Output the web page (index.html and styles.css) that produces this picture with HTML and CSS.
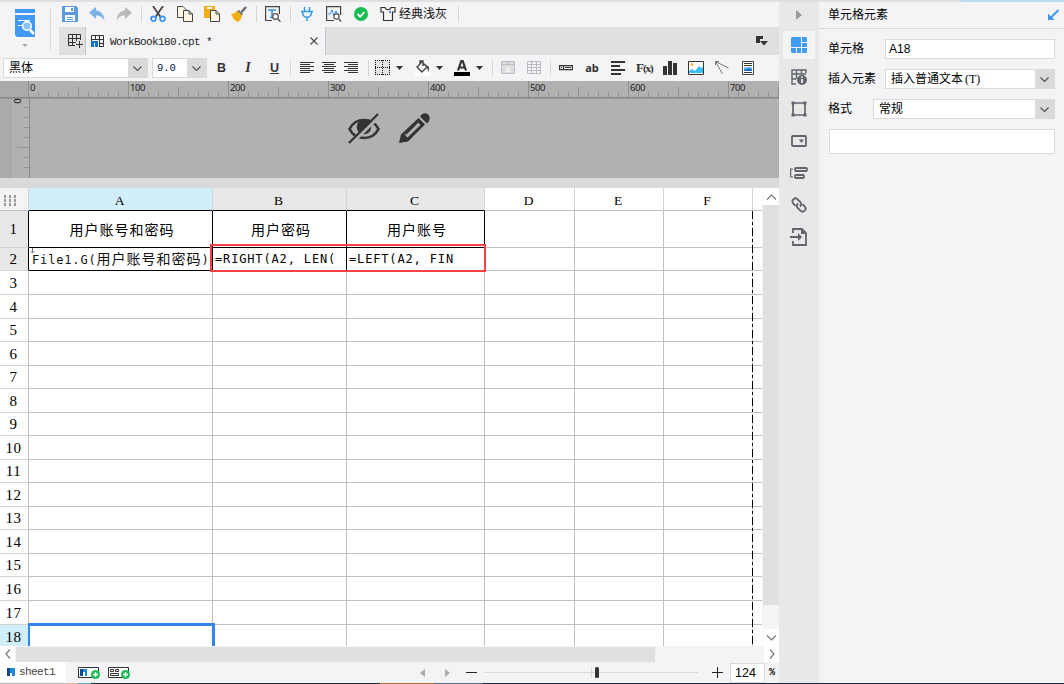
FILE: index.html
```html
<!DOCTYPE html>
<html lang="zh">
<head>
<meta charset="utf-8">
<title>WorkBook180.cpt</title>
<link rel="stylesheet" href="styles.css">
</head>
<body>
<div class="window-edge"><span></span></div>
<div class="app">
<main class="editor">
  <header class="top">
    <div class="app-menu">
      <svg width="22" height="28" viewBox="0 0 22 28"><path fill="#4199f5" d="M1 0h20v4H1zM1 6h20v22H3l-2-2z"/><path stroke="#fff" stroke-width="1.200" d="M4 11.500h12M4 16.500h6"/><circle cx="13" cy="17" r="4.300" fill="#8bc2f8" stroke="#fff" stroke-width="1.500"/><path stroke="#fff" stroke-width="2.500" d="M16 21l4 4"/></svg>
      <svg class="menu-caret" width="6" height="3"><path fill="#aaa" d="M0 0h6L3 3z"/></svg>
    </div>
    <div class="top-right">
      <div class="toolbar">
        <svg width="16" height="16"><path fill="#5b9bdc" d="M0 0h14l2 2v14H0z"/><path fill="#fff" d="M3 1h9v5H3zM3 9h10v6H3z"/><path fill="#5b9bdc" d="M9 2h2v3H9zM5 11h6v1H5zM5 13h6v1H5z"/></svg>
        <svg width="16" height="16"><path fill="#7db1e4" d="M0 6.500L7 1v3.500c5 .5 8 4 8.500 10.500C13.500 11 11 9.500 7 9.500V13z"/></svg>
        <svg width="16" height="16"><path fill="#b8b8ba" d="M16 6.500L9 1v3.500C4 5 1 8.500.5 15 2.500 11 5 9.500 9 9.500V13z"/></svg>
        <i class="sep"></i>
        <svg width="16" height="16" fill="none"><path stroke="#444" stroke-width="1.800" d="M3 0l7.500 11M13 0L5.500 11"/><circle cx="3.500" cy="12.700" r="2.400" stroke="#3992f0" stroke-width="1.700"/><circle cx="12.500" cy="12.700" r="2.400" stroke="#3992f0" stroke-width="1.700"/></svg>
        <svg width="16" height="16" fill="#fff7e2" stroke="#444"><path d="M.5.500H6L9.500 4v7.500h-9z"/><path d="M6.500 4.500H12L15.500 8v7.500h-9zM12 4.500V8h3.500"/></svg>
        <svg width="16" height="16"><path fill="#f3ab16" d="M0 0h11v12H0z"/><path fill="#fff" d="M3 1h5v2H3z"/><path fill="#fff7e2" stroke="#444" d="M6.500 4.500H12L15.500 8v7.500h-9zM12 4.500V8h3.500"/></svg>
        <svg width="16" height="16"><path stroke="#6a6c73" stroke-width="2.600" d="M15 1L10.500 6"/><path fill="#6a6c73" d="M8 4l4 4-1.500 1.500L6 5z"/><path fill="#f3ab16" d="M6 4.500l5 5C10.500 13 9 15 6.500 16L3 13.500 0 8c2.500 0 4.500-1 6-3.500z"/></svg>
        <i class="sep"></i>
        <svg width="16" height="16"><path fill="none" stroke="#444" stroke-width="1.200" d="M7 14.500H.600V.600h13.800V8"/><path stroke="#3992f0" stroke-width="1.600" d="M3 4h8M7 4v8M5 11.500h4"/><circle cx="10.500" cy="10.500" r="2.800" fill="#fff" stroke="#555" stroke-width="1.300"/><path stroke="#555" stroke-width="1.500" d="M13 13l2.500 3"/></svg>
        <i class="sep"></i>
        <svg width="16" height="16" fill="none" stroke="#2f9be8" stroke-width="1.500"><path d="M5.500 1v4M10.500 1v4M2 5.500h12M3.500 6c0 7 9 7 9 0M8 11v4"/></svg>
        <svg width="16" height="16"><path fill="none" stroke="#444" stroke-width="1.200" d="M8 14.500H.600V.600h14V9"/><path fill="none" stroke="#3992f0" d="M2 8h2l2-4 2 6 2-5 1 3h2"/><circle cx="10.500" cy="10.500" r="2.600" fill="#fff" stroke="#555" stroke-width="1.200"/><path stroke="#555" stroke-width="1.500" d="M13 13l2 2.500"/></svg>
        <svg width="16" height="16"><circle cx="8" cy="8" r="7" fill="#18bd52"/><path fill="none" stroke="#fff" stroke-width="1.800" d="M4.500 8l2.700 2.700L11.500 6"/></svg>
        <span class="theme"><svg width="16" height="16"><path fill="none" stroke="#333" stroke-width="1.200" d="M5 1.500H1V6h2.500v8.500h9V6H15V1.500h-4c-1 3-5 3-6 0z"/><path fill="#3992f0" d="M9 5h2v2H9z"/></svg>经典浅灰</span>
        <i class="sep"></i>
      </div>
      <div class="tabs">
        <div class="new-tab"><svg width="15" height="15" fill="none" stroke="#333"><path d="M7 12.500H.500V1.500h12V7M.500 5.500h12M.500 9.500H8M4.500 1.500v11M8.500 1.500V8M11.500 8v7M8 11.500h7"/></svg></div>
        <div class="tab">
          <svg width="14" height="14"><path fill="none" stroke="#333" d="M.500 7V1.500h12v11H8M.500 5.500h12M8 9.500h5M4.500 1v5M8.500 1v11"/><path fill="#1273c4" d="M0 7h7v6H4V9H3v4H0z"/></svg>
          <span>WorkBook180.cpt *</span>
          <svg class="close" width="8" height="8"><path stroke="#444" stroke-width="1.100" d="M.500.500l7 7M7.500.500l-7 7"/></svg>
        </div>
        <svg class="tab-list" width="12" height="10"><path fill="#333" d="M0 0h7v3H4v4H0zM4 5h8l-4 4.500z"/></svg>
      </div>
    </div>
  </header>

  <div class="format">
    <div class="combo font"><span>黑体</span><b><svg width="9" height="5"><path fill="none" stroke="#555" stroke-width="1.200" d="M.500.500l4 4 4-4"/></svg></b></div>
    <div class="combo size"><span>9.0</span><b><svg width="9" height="5"><path fill="none" stroke="#555" stroke-width="1.200" d="M.500.500l4 4 4-4"/></svg></b></div>
    <div class="group styles"><strong>B</strong><em>I</em><u>U</u></div>
    <i class="sep"></i>
    <div class="group aligns">
      <svg width="16" height="14"><path stroke="#333" d="M1 1.500h14M1 3.500h10M1 5.500h14M1 7.500h10M1 9.500h14M1 11.500h10"/></svg>
      <svg width="16" height="14"><path stroke="#333" d="M1 1.500h14M3 3.500h10M1 5.500h14M3 7.500h10M1 9.500h14M3 11.500h10"/></svg>
      <svg width="16" height="14"><path stroke="#333" d="M1 1.500h14M5 3.500h10M1 5.500h14M5 7.500h10M1 9.500h14M5 11.500h10"/></svg>
    </div>
    <i class="sep"></i>
    <div class="group drops">
      <svg width="16" height="16"><path fill="#e4e4e6" d="M0 1h15v14H0z"/><path fill="none" stroke="#111" stroke-dasharray="1 1" d="M0 .500h15M0 14.500h15M.500 0v15M14.500 0v15M7.500 0v15M0 7.500h15"/></svg>
      <svg width="8" height="4"><path fill="#333" d="M0 0h7L3.500 4z"/></svg>
      <svg width="16" height="16"><path fill="#fff" d="M0 12h16v4H0z"/><path fill="none" stroke="#444" stroke-width="1.400" d="M7 2l5 5-5 5-5-5zM5 5V1h3v5"/><path fill="#444" d="M10 4l4 3v5l-2-4z"/></svg>
      <svg width="8" height="4"><path fill="#333" d="M0 0h7L3.500 4z"/></svg>
      <svg width="16" height="16"><path d="M0 12h16v4H0z"/><path fill="none" stroke="#333" stroke-width="2.200" d="M4 10.500L7.300 1h1.400L12 10.500M5 7.500h6"/></svg>
      <svg width="8" height="4"><path fill="#333" d="M0 0h7L3.500 4z"/></svg>
    </div>
    <i class="sep"></i>
    <div class="group cells">
      <svg width="16" height="14"><path fill="#dedee0" stroke="#bcbcc0" d="M1.500.500h13v12h-13zM2 3.500h12M8 0v4"/><text x="5.500" y="11" font-size="9" fill="#fff">a</text></svg>
      <svg width="16" height="14"><path fill="none" stroke="#bcbcc0" d="M1.500.500h13v12h-13zM1 3.500h14M1 6.500h14M1 9.500h14M5.500 0v13M10.500 0v13"/></svg>
    </div>
    <i class="sep"></i>
    <div class="group inserts">
      <svg width="16" height="16"><path fill="none" stroke="#333" stroke-width="1.200" d="M1.600 5.600h12.800v4H1.600zM5.500 5v5M7 7.500h6M3 7.500h1"/></svg>
      <span class="ab">ab</span>
      <svg width="16" height="16"><path fill="#333" d="M1 1h14v2H1zM1 5h9v2H1zM1 9h14v2H1zM1 13h10v2H1z"/></svg>
      <span class="fx">F<small>(x)</small></span>
      <svg width="16" height="16"><path fill="#333" d="M1 6h4v9H1zM6 1h4v14H6zM11 3h4v12h-4z"/></svg>
      <svg width="16" height="16"><path fill="#fff" stroke="#333" d="M.500 1.500h15v13H.500z"/><circle cx="4" cy="4.500" r="1.500" fill="#ffb740"/><path fill="#38bdf8" d="M1 11l3-2 3 2 4-5 2 2 2-1v6H1z"/></svg>
      <svg width="16" height="16"><path fill="none" stroke="#777" d="M8.500 14L1.500 1.500 14.500 8M1.500 5V1.500H5"/></svg>
      <svg width="16" height="16"><path fill="#fff" stroke="#444" d="M2.500 1.500h11v13h-11z"/><path fill="#333" d="M4 3h8v1H4zM4 5h8v1H4zM4 12h8v1H4z"/><path fill="#7fc0f7" d="M4 7h8v4H4z"/><path fill="#1a72c8" d="M4 11V9.500L6.500 9 9 8l3 1.500V11z"/></svg>
    </div>
  </div>

  <section class="params">
    <div class="ruler"><span>0</span><span>100</span><span>200</span><span>300</span><span>400</span><span>500</span><span>600</span><span>700</span></div>
    <div class="canvas-row">
      <div class="v-ruler"><span>0</span></div>
      <div class="canvas">
        <svg width="32" height="31" viewBox="0 0 32 31"><g fill="none" stroke="#333" stroke-width="2.600"><path d="M1.500 16c6-12 23-12 29 0-6 12-23 12-29 0z"/><circle cx="16" cy="14" r="6" fill="#333"/></g><path stroke="#b1b1b1" stroke-width="3" d="M3 31L32 3"/><path stroke="#333" stroke-width="2.300" d="M1 30L30 1"/></svg>
        <svg width="31" height="31" viewBox="0 0 31 31"><path fill="#333" fill-rule="evenodd" d="M19.500 5l6.500 6.500L9 28.500 0 30l2-8.500zM5.500 21.500l3 3L21.500 12 19 9.500z"/><path stroke="#b1b1b1" stroke-width="1.500" d="M8 22.500L19.500 11"/><path stroke="#333" stroke-width="1.500" d="M6.500 21.500L18 10"/><path fill="#333" d="M21 3.500C24-1 28 0 29.500 2c2 2.500 1.500 6-1.500 8.500z"/></svg>
      </div>
    </div>
  </section>

  <section class="sheet">
    <div class="viewport">
      <table>
        <colgroup><col class="c0"><col class="ca"><col class="cb"><col class="cc"><col class="cd"><col class="ce"><col class="cf"><col class="cg"></colgroup>
        <thead><tr><th class="corner"><svg width="13" height="11"><path stroke="#999" stroke-width="2" stroke-dasharray="3 1" d="M1 0v11M6 0v11M11 0v11"/></svg></th><th class="active">A</th><th class="used">B</th><th class="used">C</th><th>D</th><th>E</th><th>F</th><th></th></tr></thead>
        <tbody>
        <tr class="title"><th>1</th><td>用户账号和密码</td><td>用户密码</td><td>用户账号</td><td></td><td></td><td></td><td></td></tr>
        <tr class="data"><th>2</th><td class="field">File1.G(<span>用户账号和密码</span>)<svg class="expand" width="5" height="6"><path fill="none" stroke="#777" d="M2.500 0v5M.500 3l2 2 2-2"/></svg></td><td>=RIGHT(A2, LEN(</td><td>=LEFT(A2, FIN</td><td></td><td></td><td></td><td></td></tr>
        <tr class="tall"><th>3</th><td></td><td></td><td></td><td></td><td></td><td></td><td></td></tr>
        <tr class="tall"><th>4</th><td></td><td></td><td></td><td></td><td></td><td></td><td></td></tr>
        <tr><th>5</th><td></td><td></td><td></td><td></td><td></td><td></td><td></td></tr>
        <tr class="tall"><th>6</th><td></td><td></td><td></td><td></td><td></td><td></td><td></td></tr>
        <tr><th>7</th><td></td><td></td><td></td><td></td><td></td><td></td><td></td></tr>
        <tr class="tall"><th>8</th><td></td><td></td><td></td><td></td><td></td><td></td><td></td></tr>
        <tr><th>9</th><td></td><td></td><td></td><td></td><td></td><td></td><td></td></tr>
        <tr class="tall"><th>10</th><td></td><td></td><td></td><td></td><td></td><td></td><td></td></tr>
        <tr><th>11</th><td></td><td></td><td></td><td></td><td></td><td></td><td></td></tr>
        <tr class="tall"><th>12</th><td></td><td></td><td></td><td></td><td></td><td></td><td></td></tr>
        <tr><th>13</th><td></td><td></td><td></td><td></td><td></td><td></td><td></td></tr>
        <tr class="tall"><th>14</th><td></td><td></td><td></td><td></td><td></td><td></td><td></td></tr>
        <tr><th>15</th><td></td><td></td><td></td><td></td><td></td><td></td><td></td></tr>
        <tr class="tall"><th>16</th><td></td><td></td><td></td><td></td><td></td><td></td><td></td></tr>
        <tr class="tall"><th>17</th><td></td><td></td><td></td><td></td><td></td><td></td><td></td></tr>
        <tr class="tall"><th class="active">18</th><td></td><td></td><td></td><td></td><td></td><td></td><td></td></tr>
        </tbody>
      </table>
      <div class="page-break"></div>
      <div class="callout"></div>
      <div class="selection"></div>
    </div>
    <div class="v-scroll">
      <b><svg width="11" height="6"><path fill="none" stroke="#777" stroke-width="1.200" d="M1 5.500l4.500-4.500L10 5.500"/></svg></b>
      <i></i>
      <b><svg width="11" height="6"><path fill="none" stroke="#777" stroke-width="1.200" d="M1 .500L5.500 5 10 .500"/></svg></b>
    </div>
  </section>
  <div class="h-scroll">
    <b><svg width="6" height="10"><path fill="none" stroke="#777" stroke-width="1.200" d="M5 .500L1 5l4 4.500"/></svg></b>
    <i></i>
    <b><svg width="6" height="10"><path fill="none" stroke="#777" stroke-width="1.200" d="M1 .500L5 5 1 9.500"/></svg></b>
  </div>
  <footer class="status">
    <div class="sheet-tab"><svg width="8" height="8"><path fill="#0b4d8c" d="M0 0h3v8H0z"/><path fill="#1b87d8" d="M3 0h5v8H5V5H3z"/></svg><span>sheet1</span></div>
    <div class="add">
      <svg width="22" height="13"><path fill="#fff" stroke="#333" d="M.500 1.500h20v10H.500z"/><path fill="#0b4d8c" d="M2 3h3v7H2z"/><path fill="#1b87d8" d="M5 3h4v7H7V6H5z"/><circle cx="17.500" cy="8.500" r="4.500" fill="#18bd52"/><path stroke="#fff" stroke-width="1.500" d="M15 8.500h5M17.500 6v5"/></svg>
      <svg width="22" height="13"><path fill="#fff" stroke="#333" d="M.500 1.500h20v10H.500z"/><path fill="none" stroke="#333" d="M2.500 3.500h3v2h-3zM7.500 3.500h3v2h-3zM2.500 7.500h8v2h-8z"/><circle cx="17.500" cy="8.500" r="4.500" fill="#18bd52"/><path stroke="#fff" stroke-width="1.500" d="M15 8.500h5M17.500 6v5"/></svg>
    </div>
    <div class="pager"><svg width="5" height="8"><path fill="#aaa" d="M5 0v8L0 4z"/></svg><svg width="5" height="8"><path fill="#aaa" d="M0 0v8l5-4z"/></svg></div>
    <svg class="minus" width="11" height="11"><path stroke="#222" d="M0 5.500h11"/></svg>
    <svg class="slider" width="214" height="13"><path stroke="#d8d8da" d="M0 6.500h214M107.500 2v9"/><rect x="111" y="1" width="4" height="11" rx="1.500" fill="#333"/></svg>
    <svg class="plus" width="11" height="11"><path stroke="#222" d="M0 5.500h11M5.500 0v11"/></svg>
    <span class="zoom">124</span><span class="percent">%</span>
  </footer>
</main>

<nav class="rail">
  <a><svg width="6" height="10"><path fill="#999" d="M0 0l6 5-6 5z"/></svg></a>
  <a class="on"><svg width="16" height="16"><path fill="#409bf6" d="M1 0h9v10H0V1zM11 0h4l1 1v4h-5zM11 6h5v4h-5zM0 11h5v5H1l-1-1zM6 11h4v5H6zM11 11h5v4l-1 1h-4z"/></svg></a>
  <a><svg width="16" height="16"><path fill="none" stroke="#62646d" stroke-width="1.400" d="M15 4V1H1v14h4M1 5h14M1 10h4M5.500 1v9M10.500 1v4"/><circle cx="11" cy="11" r="5" fill="#62646d"/><path stroke="#fff" stroke-width="1.600" d="M11 7.500V9M11 10v4"/></svg></a>
  <a><svg width="16" height="16"><path fill="none" stroke="#62646d" stroke-width="1.700" d="M2 2h12v12H2z"/><path fill="#62646d" d="M.5.500h3v3h-3zM12.500.500h3v3h-3zM.5 12.500h3v3h-3zM12.500 12.500h3v3h-3z"/></svg></a>
  <a><svg width="16" height="16"><rect x="1" y="3" width="14" height="10" rx="1" fill="none" stroke="#62646d" stroke-width="1.800"/><path fill="#62646d" d="M8 6.500h5L10.500 10z"/></svg></a>
  <a><svg width="18" height="16"><path fill="none" stroke="#62646d" stroke-width="1.200" d="M3 4H.600v8H3"/><g fill="none" stroke="#62646d" stroke-width="1.800"><rect x="5" y="3" width="12" height="3" rx="1"/><rect x="5" y="10" width="9" height="3" rx="1"/></g></svg></a>
  <a><svg width="16" height="16"><g fill="none" stroke="#62646d" stroke-width="1.900" transform="rotate(45 8 8)"><path d="M6 11H3C-1 11-1 5 3 5h4c2 0 3 2 2.500 3.500"/><path d="M10 5h3c4 0 4 6 0 6H9c-2 0-3-2-2.500-3.500"/></g></svg></a>
  <a><svg width="18" height="18"><path fill="none" stroke="#62646d" stroke-width="1.800" d="M3 5V1h9l4 4v12H3v-4M0 9h10"/><path fill="#62646d" d="M8 5l4 4-4 4zM11 1l5 5h-5z"/></svg></a>
</nav>

<aside class="panel">
  <h1>单元格元素<svg width="12" height="12"><path stroke="#409bf6" stroke-width="2" d="M11.500 1L4 8.500"/><path fill="#409bf6" d="M1 4.500L7.500 11H1z"/></svg></h1>
  <div class="fields">
    <div class="field-row"><label>单元格</label><div class="input">A18</div></div>
    <div class="field-row"><label>插入元素</label><div class="input select"><span>插入普通文本<tt>(T)</tt></span><b><svg width="9" height="5"><path fill="none" stroke="#555" stroke-width="1.200" d="M.500.500l4 4 4-4"/></svg></b></div></div>
    <div class="field-row wide"><label>格式</label><div class="input select"><span>常规</span><b><svg width="9" height="5"><path fill="none" stroke="#555" stroke-width="1.200" d="M.500.500l4 4 4-4"/></svg></b></div></div>
    <div class="input preview"></div>
  </div>
</aside>
</div>
<div class="desktop-edge"></div>
</body>
</html>
```
FILE: styles.css
```css
* { box-sizing: border-box; }
body { margin: 0; width: 1064px; height: 684px; overflow: hidden; background: #f4f4f7; color: #000; font: 12px/16px "Liberation Sans", "Noto Sans CJK SC", sans-serif; }
svg { display: block; flex: none; }
i, em, b { font-style: normal; }
.window-edge { height: 2px; background: #e0e0e2; display: flex; justify-content: flex-end; }
.window-edge span { width: 103px; background: #b9dbf0; }
.app { display: grid; grid-template-columns: 779px 40px 245px; height: 681px; }
.desktop-edge { height: 1px; background: linear-gradient(90deg, #bbb 66px, #e4b59d 66px 78px, #65acc6 78px 91px, #1f2b36 91px 380px, #bd702f 380px 434px, #596b7d 434px 483px, #1c2b40 483px); }
.editor { display: flex; flex-direction: column; min-width: 0; }
.sep { width: 1px; background: #d6d6d8; flex: none; }

/* header */
.top { height: 53px; display: flex; }
.app-menu { width: 51px; height: 42px; margin-top: 6px; border-right: 1px solid #dadadc; padding: 1px 0 0 14px; margin-right: 8px; }
.menu-caret { margin: 7px 0 0 8px; }
.top-right { flex: 1; }
.toolbar { height: 25px; display: flex; align-items: center; gap: 11px; padding: 0 0 1px 3px; }
.toolbar .sep { height: 16px; margin: 0 -3px 0 -2px; }
.theme { display: flex; align-items: center; gap: 3px; color: #111; margin-right: 2px; }
.tabs { height: 28px; display: flex; background: #e0e0e2; }
.new-tab { width: 27px; padding: 6px 0 0 9px; border-right: 1px solid #c4c4c8; }
.tab { width: 240px; display: flex; align-items: center; padding-left: 5px; background: #f4f4f7; border-right: 1px solid #c8c8cc; font: 11px/14px "Liberation Mono", monospace; letter-spacing: -.6px; color: #222; }
.tab span { margin: 1px 0 0 5px; }
.tab .close { margin-left: auto; margin-right: 7px; }
.tab-list { margin: 9px 11px 0 auto; }

/* formatting bar */
.format { height: 26px; display: flex; align-items: center; padding-left: 3px; }
.format .sep { height: 16px; }
.group { display: flex; align-items: center; }
.combo { height: 20px; display: flex; border: 1px solid #dadadc; background: #fff; line-height: 18px; }
.combo span { flex: 1; padding-left: 5px; }
.combo b, .select b { width: 19px; display: grid; place-items: center; background: #dadadd; }
.font { width: 145px; }
.size { width: 55px; margin-left: 4px; }
.size span { padding-left: 4px; font: 10.500px/18px "Liberation Mono", monospace; color: #002050; }
.styles { margin-left: 7px; width: 68px; justify-content: space-between; margin-right: 8px; color: #333; font-size: 12.500px; }
.styles > * { width: 15px; text-align: center; }
.styles em { font: italic bold 14px "Liberation Serif", serif; }
.styles u { font-weight: bold; }
.aligns { gap: 6px; margin: 0 9px 0 8px; }
.drops { gap: 5px; margin: 0 8px 0 6px; }
.drops svg:nth-child(3) { margin-left: 6px; }
.drops svg:nth-child(5) { margin-left: 5px; }
.drops svg:nth-child(6) { margin-left: 1px; }
.cells { gap: 10px; margin: 0 8px 0 7px; }
.inserts { gap: 10px; margin-left: 7px; color: #333; }
.ab { width: 16px; font: bold 11px/16px "Noto Sans", sans-serif; text-align: center; }
.fx { width: 16px; font: bold 13px/16px "Liberation Serif", serif; white-space: nowrap; letter-spacing: -1px; }
.fx small { font-size: 11px; letter-spacing: -1px; }

/* parameter pane */
.params { height: 97px; background: #b1b1b1; }
.ruler { height: 17px; padding-left: 28px; border-bottom: 1px solid #888; display: flex;
  background: repeating-linear-gradient(90deg, #8e8e8e 0 1px, transparent 1px 100px) 28px 0 / 751px 16px no-repeat,
    repeating-linear-gradient(90deg, #8e8e8e 0 1px, transparent 1px 50px) 28px 6px / 751px 10px no-repeat,
    repeating-linear-gradient(90deg, #929292 0 1px, transparent 1px 10px) 28px 11px / 751px 5px no-repeat,
    linear-gradient(90deg, #aaa 28px, #b1b1b1 28px); }
.ruler span { flex: 0 0 100px; padding-left: 2px; font: 9.500px/13px "Noto Sans", sans-serif; letter-spacing: -.4px; color: #222; }
.canvas-row { display: flex; height: 80px; border-top: 1px solid #999; }
.v-ruler { width: 30px; border-right: 1px solid #888;
  background: repeating-linear-gradient(#929292 0 1px, transparent 1px 10px) 24px 8px / 5px 70px no-repeat, linear-gradient(#929292, #929292) 17px 48px / 11px 1px no-repeat, linear-gradient(90deg, #aaa 12px, #b1b1b1 12px); }
.v-ruler span { display: block; width: 12px; height: 12px; margin: -4px 0 0 12px; text-align: center; transform: rotate(-90deg); font: 9.500px/12px "Noto Sans", sans-serif; }
.canvas { display: flex; gap: 19px; padding: 14px 0 0 318px; }

/* worksheet */
.sheet { height: 468px; display: flex; border-top: 10px solid #dadadc; }
.viewport { position: relative; width: 762px; height: 458px; overflow: hidden; background: #fff; }
table { border-collapse: separate; border-spacing: 0; table-layout: fixed; width: 762px; }
.c0 { width: 29px; } .ca { width: 184px; } .cb { width: 134px; } .cc { width: 138px; } .cd { width: 90px; } .ce, .cf { width: 89px; } .cg { width: 9px; }
th, td { padding: 0; border: 0 solid #c0c0c0; border-width: 0 1px 1px 0; white-space: nowrap; overflow: hidden; }
th { font: 15px/18px "Liberation Serif", serif; border-right-color: #d4d4d6; }
thead th { height: 23px; font-size: 13.500px; padding: 4px 2px 0 0; line-height: 18px; }
tbody tr, tbody th { height: 23px; }
tbody th { padding: 0 1px 0 0; letter-spacing: .5px; line-height: 18px; border-bottom-color: #d4d4d6; border-right-color: #c0c0c0; }
tbody .tall, .tall th { height: 24px; }
thead .corner { background: #f4f4f7; padding-top: 2px; }
.corner svg { margin-left: 4px; }
.used, .title th, .data th { background: #e8e8e8; }
th.active { background: #d0effb; }
td:last-child, th:last-child { border-right: 0; }
.title, .title th { height: 37px; }
.title td { text-align: center; font: 14px/18px "Noto Sans CJK SC", sans-serif; letter-spacing: 1px; padding-left: 3px; }
.data td { font: 12px/18px "DejaVu Sans Mono", "Noto Sans CJK SC", monospace; letter-spacing: .85px; padding: 0 0 1px 2px; }
.data td.field { position: relative; padding: 0 0 0 3px; color: #111; }
.field span { font: 14px/18px "Noto Sans CJK SC", sans-serif; letter-spacing: 1px; }
.expand { position: absolute; left: 1px; top: 0; }
.title td:nth-child(-n+4), .data td:nth-child(-n+4), .title th, .data th { border-right-color: #000; }
.title td:nth-child(-n+4), .data td:nth-child(-n+4), thead th:nth-child(n+2):nth-child(-n+4) { border-bottom-color: #000; }
.page-break { position: absolute; left: 752px; top: 23px; bottom: 0; width: 1px; background: repeating-linear-gradient(#000 0 8px, #ccc 8px 11px, #000 11px 14px, #ccc 14px 17px); }
.callout { position: absolute; left: 210px; top: 56px; width: 276px; height: 28px; border: 2px solid #f44343; }
.selection { position: absolute; left: 28px; top: 435px; width: 187px; height: 30px; border: 3px solid #3484ec; border-left-width: 2px; }
.v-scroll { width: 17px; padding-left: 1px; display: flex; flex-direction: column; }
.v-scroll b { height: 17px; background: #fff; display: grid; place-items: center; }
.v-scroll i { height: 400px; background: #e0e0e0; margin-bottom: 24px; }
.h-scroll { height: 16px; display: flex; align-items: stretch; }
.h-scroll b { width: 15px; background: #fff; display: grid; place-items: center; }
.h-scroll i { width: 639px; margin: 1px 109px 0 1px; background: #e0e0e0; }

/* status bar */
.status { height: 21px; display: flex; align-items: center; }
.sheet-tab { width: 66px; height: 20px; margin-bottom: 1px; padding-left: 7px; display: flex; align-items: center; gap: 4px; background: #fff; font: 11px/18px "Liberation Mono", monospace; letter-spacing: -.6px; color: #444; }
.add { display: flex; gap: 8px; margin-left: 12px; }
.pager { display: flex; gap: 20px; margin-left: 290px; }
.minus { margin-left: 16px; }
.slider { margin-left: 7px; }
.plus { margin-left: 14px; }
.zoom { width: 35px; height: 20px; margin-left: 7px; padding-left: 4px; background: #fff; border: 1px solid #dadadc; font-size: 12.500px; line-height: 18px; }
.percent { margin-left: 4px; font: bold 10px/18px "Liberation Mono", monospace; }

/* side rail */
.rail { background: #e8e8e8; padding: 0 4px; }
.rail a { height: 32px; display: grid; place-items: center; }
.rail a:first-child { height: 25px; }
.rail a.on { height: 28px; margin: 4px 0 2px; background: #f4f4f7; }

/* properties */
.panel h1 { margin: 0; height: 27px; border-bottom: 1px solid #d8d8da; padding-left: 9px; padding-right: 5px; display: flex; align-items: center; justify-content: space-between; font-size: 12px; font-weight: normal; }
.fields { padding: 10px 9px 0 10px; }
.field-row { display: grid; grid-template-columns: 56px 170px; height: 20px; margin-bottom: 10px; align-items: center; white-space: nowrap; }
.field-row label { margin-left: -1px; }
.field-row.wide { grid-template-columns: 44px 182px; }
.input { height: 20px; border: 1px solid #dadadc; background: #fff; padding-left: 3px; line-height: 18px; }
.select { display: flex; justify-content: space-between; padding-left: 5px; }
.select tt { font: 12px "Liberation Serif", serif; margin-left: 2px; }
.preview { height: 25px; }
```
